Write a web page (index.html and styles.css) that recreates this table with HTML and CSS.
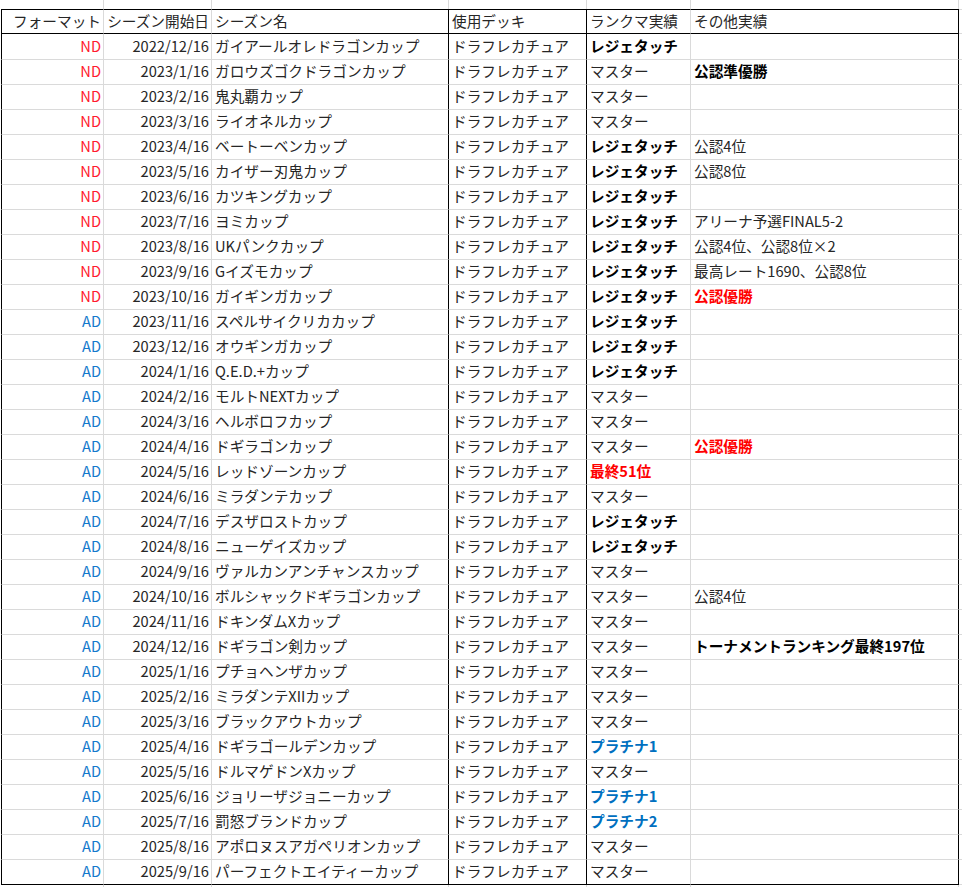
FILE: index.html
```html
<!DOCTYPE html>
<html lang="ja">
<head>
<meta charset="utf-8">
<title>シーズン実績</title>
<link rel="stylesheet" href="styles.css">
</head>
<body>
<div class="sheet">
  <div class="row spacer"><div class="c c1"></div><div class="c c2"></div><div class="c c3"></div><div class="c c4"></div><div class="c c5"></div><div class="c c6"></div><div class="c c7"></div></div>
  <div class="row head"><div class="c c1 r">フォーマット</div><div class="c c2 r">シーズン開始日</div><div class="c c3">シーズン名</div><div class="c c4">使用デッキ</div><div class="c c5">ランクマ実績</div><div class="c c6">その他実績</div><div class="c c7"></div></div>

  <div class="row first"><div class="c c1 r nd">ND</div><div class="c c2 r">2022/12/16</div><div class="c c3">ガイアールオレドラゴンカップ</div><div class="c c4">ドラフレカチュア</div><div class="c c5 b">レジェタッチ</div><div class="c c6"></div><div class="c c7"></div></div>
  <div class="row"><div class="c c1 r nd">ND</div><div class="c c2 r">2023/1/16</div><div class="c c3">ガロウズゴクドラゴンカップ</div><div class="c c4">ドラフレカチュア</div><div class="c c5">マスター</div><div class="c c6 b">公認準優勝</div><div class="c c7"></div></div>
  <div class="row"><div class="c c1 r nd">ND</div><div class="c c2 r">2023/2/16</div><div class="c c3">鬼丸覇カップ</div><div class="c c4">ドラフレカチュア</div><div class="c c5">マスター</div><div class="c c6"></div><div class="c c7"></div></div>
  <div class="row"><div class="c c1 r nd">ND</div><div class="c c2 r">2023/3/16</div><div class="c c3">ライオネルカップ</div><div class="c c4">ドラフレカチュア</div><div class="c c5">マスター</div><div class="c c6"></div><div class="c c7"></div></div>
  <div class="row"><div class="c c1 r nd">ND</div><div class="c c2 r">2023/4/16</div><div class="c c3">ベートーベンカップ</div><div class="c c4">ドラフレカチュア</div><div class="c c5 b">レジェタッチ</div><div class="c c6">公認4位</div><div class="c c7"></div></div>
  <div class="row"><div class="c c1 r nd">ND</div><div class="c c2 r">2023/5/16</div><div class="c c3">カイザー刃鬼カップ</div><div class="c c4">ドラフレカチュア</div><div class="c c5 b">レジェタッチ</div><div class="c c6">公認8位</div><div class="c c7"></div></div>
  <div class="row"><div class="c c1 r nd">ND</div><div class="c c2 r">2023/6/16</div><div class="c c3">カツキングカップ</div><div class="c c4">ドラフレカチュア</div><div class="c c5 b">レジェタッチ</div><div class="c c6"></div><div class="c c7"></div></div>
  <div class="row"><div class="c c1 r nd">ND</div><div class="c c2 r">2023/7/16</div><div class="c c3">ヨミカップ</div><div class="c c4">ドラフレカチュア</div><div class="c c5 b">レジェタッチ</div><div class="c c6">アリーナ予選FINAL5-2</div><div class="c c7"></div></div>
  <div class="row"><div class="c c1 r nd">ND</div><div class="c c2 r">2023/8/16</div><div class="c c3">UKパンクカップ</div><div class="c c4">ドラフレカチュア</div><div class="c c5 b">レジェタッチ</div><div class="c c6">公認4位、公認8位×2</div><div class="c c7"></div></div>
  <div class="row"><div class="c c1 r nd">ND</div><div class="c c2 r">2023/9/16</div><div class="c c3">Gイズモカップ</div><div class="c c4">ドラフレカチュア</div><div class="c c5 b">レジェタッチ</div><div class="c c6">最高レート1690、公認8位</div><div class="c c7"></div></div>
  <div class="row"><div class="c c1 r nd">ND</div><div class="c c2 r">2023/10/16</div><div class="c c3">ガイギンガカップ</div><div class="c c4">ドラフレカチュア</div><div class="c c5 b">レジェタッチ</div><div class="c c6 b red">公認優勝</div><div class="c c7"></div></div>
  <div class="row"><div class="c c1 r ad">AD</div><div class="c c2 r">2023/11/16</div><div class="c c3">スペルサイクリカカップ</div><div class="c c4">ドラフレカチュア</div><div class="c c5 b">レジェタッチ</div><div class="c c6"></div><div class="c c7"></div></div>
  <div class="row"><div class="c c1 r ad">AD</div><div class="c c2 r">2023/12/16</div><div class="c c3">オウギンガカップ</div><div class="c c4">ドラフレカチュア</div><div class="c c5 b">レジェタッチ</div><div class="c c6"></div><div class="c c7"></div></div>
  <div class="row"><div class="c c1 r ad">AD</div><div class="c c2 r">2024/1/16</div><div class="c c3">Q.E.D.+カップ</div><div class="c c4">ドラフレカチュア</div><div class="c c5 b">レジェタッチ</div><div class="c c6"></div><div class="c c7"></div></div>
  <div class="row"><div class="c c1 r ad">AD</div><div class="c c2 r">2024/2/16</div><div class="c c3">モルトNEXTカップ</div><div class="c c4">ドラフレカチュア</div><div class="c c5">マスター</div><div class="c c6"></div><div class="c c7"></div></div>
  <div class="row"><div class="c c1 r ad">AD</div><div class="c c2 r">2024/3/16</div><div class="c c3">ヘルボロフカップ</div><div class="c c4">ドラフレカチュア</div><div class="c c5">マスター</div><div class="c c6"></div><div class="c c7"></div></div>
  <div class="row"><div class="c c1 r ad">AD</div><div class="c c2 r">2024/4/16</div><div class="c c3">ドギラゴンカップ</div><div class="c c4">ドラフレカチュア</div><div class="c c5">マスター</div><div class="c c6 b red">公認優勝</div><div class="c c7"></div></div>
  <div class="row"><div class="c c1 r ad">AD</div><div class="c c2 r">2024/5/16</div><div class="c c3">レッドゾーンカップ</div><div class="c c4">ドラフレカチュア</div><div class="c c5 b red">最終51位</div><div class="c c6"></div><div class="c c7"></div></div>
  <div class="row"><div class="c c1 r ad">AD</div><div class="c c2 r">2024/6/16</div><div class="c c3">ミラダンテカップ</div><div class="c c4">ドラフレカチュア</div><div class="c c5">マスター</div><div class="c c6"></div><div class="c c7"></div></div>
  <div class="row"><div class="c c1 r ad">AD</div><div class="c c2 r">2024/7/16</div><div class="c c3">デスザロストカップ</div><div class="c c4">ドラフレカチュア</div><div class="c c5 b">レジェタッチ</div><div class="c c6"></div><div class="c c7"></div></div>
  <div class="row"><div class="c c1 r ad">AD</div><div class="c c2 r">2024/8/16</div><div class="c c3">ニューゲイズカップ</div><div class="c c4">ドラフレカチュア</div><div class="c c5 b">レジェタッチ</div><div class="c c6"></div><div class="c c7"></div></div>
  <div class="row"><div class="c c1 r ad">AD</div><div class="c c2 r">2024/9/16</div><div class="c c3">ヴァルカンアンチャンスカップ</div><div class="c c4">ドラフレカチュア</div><div class="c c5">マスター</div><div class="c c6"></div><div class="c c7"></div></div>
  <div class="row"><div class="c c1 r ad">AD</div><div class="c c2 r">2024/10/16</div><div class="c c3">ボルシャックドギラゴンカップ</div><div class="c c4">ドラフレカチュア</div><div class="c c5">マスター</div><div class="c c6">公認4位</div><div class="c c7"></div></div>
  <div class="row"><div class="c c1 r ad">AD</div><div class="c c2 r">2024/11/16</div><div class="c c3">ドキンダムXカップ</div><div class="c c4">ドラフレカチュア</div><div class="c c5">マスター</div><div class="c c6"></div><div class="c c7"></div></div>
  <div class="row"><div class="c c1 r ad">AD</div><div class="c c2 r">2024/12/16</div><div class="c c3">ドギラゴン剣カップ</div><div class="c c4">ドラフレカチュア</div><div class="c c5">マスター</div><div class="c c6 b">トーナメントランキング最終197位</div><div class="c c7"></div></div>
  <div class="row"><div class="c c1 r ad">AD</div><div class="c c2 r">2025/1/16</div><div class="c c3">プチョヘンザカップ</div><div class="c c4">ドラフレカチュア</div><div class="c c5">マスター</div><div class="c c6"></div><div class="c c7"></div></div>
  <div class="row"><div class="c c1 r ad">AD</div><div class="c c2 r">2025/2/16</div><div class="c c3">ミラダンテXIIカップ</div><div class="c c4">ドラフレカチュア</div><div class="c c5">マスター</div><div class="c c6"></div><div class="c c7"></div></div>
  <div class="row"><div class="c c1 r ad">AD</div><div class="c c2 r">2025/3/16</div><div class="c c3">ブラックアウトカップ</div><div class="c c4">ドラフレカチュア</div><div class="c c5">マスター</div><div class="c c6"></div><div class="c c7"></div></div>
  <div class="row"><div class="c c1 r ad">AD</div><div class="c c2 r">2025/4/16</div><div class="c c3">ドギラゴールデンカップ</div><div class="c c4">ドラフレカチュア</div><div class="c c5 b blue">プラチナ1</div><div class="c c6"></div><div class="c c7"></div></div>
  <div class="row"><div class="c c1 r ad">AD</div><div class="c c2 r">2025/5/16</div><div class="c c3">ドルマゲドンXカップ</div><div class="c c4">ドラフレカチュア</div><div class="c c5">マスター</div><div class="c c6"></div><div class="c c7"></div></div>
  <div class="row"><div class="c c1 r ad">AD</div><div class="c c2 r">2025/6/16</div><div class="c c3">ジョリーザジョニーカップ</div><div class="c c4">ドラフレカチュア</div><div class="c c5 b blue">プラチナ1</div><div class="c c6"></div><div class="c c7"></div></div>
  <div class="row"><div class="c c1 r ad">AD</div><div class="c c2 r">2025/7/16</div><div class="c c3">罰怒ブランドカップ</div><div class="c c4">ドラフレカチュア</div><div class="c c5 b blue">プラチナ2</div><div class="c c6"></div><div class="c c7"></div></div>
  <div class="row"><div class="c c1 r ad">AD</div><div class="c c2 r">2025/8/16</div><div class="c c3">アポロヌスアガペリオンカップ</div><div class="c c4">ドラフレカチュア</div><div class="c c5">マスター</div><div class="c c6"></div><div class="c c7"></div></div>
  <div class="row last"><div class="c c1 r ad">AD</div><div class="c c2 r">2025/9/16</div><div class="c c3">パーフェクトエイティーカップ</div><div class="c c4">ドラフレカチュア</div><div class="c c5">マスター</div><div class="c c6"></div><div class="c c7"></div></div>
  <div class="row spacer bottom"><div class="c c1"></div><div class="c c2"></div><div class="c c3"></div><div class="c c4"></div><div class="c c5"></div><div class="c c6"></div><div class="c c7"></div></div>
</div>
</body>
</html>
```

FILE: styles.css
```css
* { box-sizing: border-box; }

html, body {
  margin: 0;
  padding: 0;
  background: #ffffff;
}

body {
  font-family: "Noto Sans CJK JP", "Noto Sans", sans-serif;
  font-size: 14.67px;
  color: #262626;
  overflow: hidden;
}

.sheet {
  display: flex;
  flex-direction: column;
  margin-left: 1px;
  width: 961px;
}

.row {
  display: grid;
  grid-template-columns: 103px 108px 237px 138px 104px 268px 2px;
  height: 25px;
}

.c {
  border-right: 1px solid #dadada;
  border-bottom: 1px solid #dadada;
  padding: 0 2px 0 3px;
  line-height: 22px;
  white-space: nowrap;
  overflow: hidden;
}

.c1 { border-left: 1px solid #000; }
.c3, .c4, .c6 { border-right-color: #000; }

.r { text-align: right; padding: 0 2px 0 0; }

.row.first { height: 26px; }
.row.first .c { line-height: 23px; }

.row.last .c1,
.row.last .c2,
.row.last .c3,
.row.last .c4,
.row.last .c5,
.row.last .c6 { border-bottom-color: #000; }

.head .c {
  border-top: 1px solid #000;
  line-height: 21px;
}
.head .c1, .head .c2, .head .c3, .head .c4, .head .c5, .head .c6 {
  border-bottom-color: #000;
}
.head .c7 { border-top-color: #dadada; border-bottom-color: #dadada; }

.spacer { height: 9px; }
.spacer.bottom { height: 3px; }
.spacer .c {
  border-bottom: none;
  border-left-color: transparent;
  border-right-color: #dadada;
}

.nd { color: #ff1a2e; }
.ad { color: #1479cc; }
.b { font-weight: 700; color: #000; }
.red { color: #ff0000; }
.blue { color: #0070c0; }
```
